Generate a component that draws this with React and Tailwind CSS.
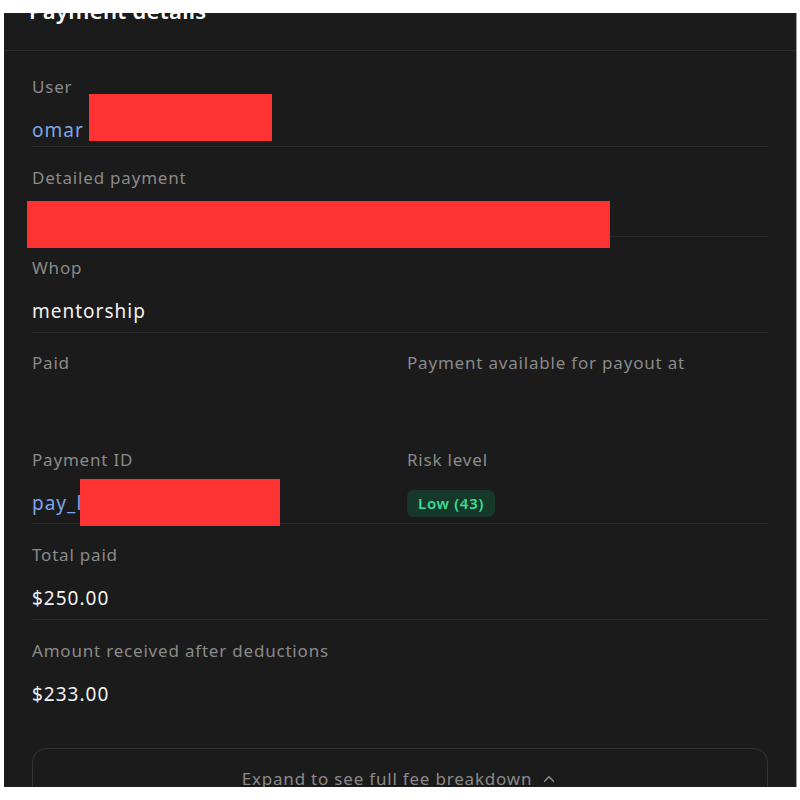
import React from 'react'
import { ChevronUp } from 'lucide-react'

const Label = ({ children }) => (
  <div className="text-[17px] leading-6 tracking-[0.8px] text-[#8a8a8a]">{children}</div>
)

const Value = ({ children, link }) => (
  <div className={`text-[19px] leading-7 tracking-[1px] ${link ? 'text-[#7ba6ec]' : 'text-[#f2f2f2]'}`}>{children}</div>
)

const Redact = ({ className }) => (
  <div className={`absolute bg-[#ff3333] ${className}`} />
)

export default function App() {
  return (
    <div className="min-h-[800px] bg-white pt-[13px] pl-[4px]" style={{ fontFamily: '"Noto Sans", "Open Sans", sans-serif' }}>
      <div className="w-[793px] h-[774px] bg-[#1b1b1b] border-r border-[#9c9c9c] overflow-hidden flex flex-col">
        {/* header */}
        <div className="shrink-0 h-[38px] border-b border-[#2b2b2b] overflow-hidden relative">
          <div className="absolute left-[25px] -top-[19px] text-[22px] leading-8 font-semibold tracking-[0.3px] text-white">Payment details</div>
        </div>

        <div className="shrink-0 px-[28px] flex flex-col">
          {/* user */}
          <div className="relative pt-[24px] pb-[2px] border-b border-[#2b2b2b]">
            <Label>User</Label>
            <div className="mt-[17px]"><Value link>omar</Value></div>
            <Redact className="left-[57px] top-[43px] w-[183px] h-[47px]" />
          </div>

          {/* detailed payment */}
          <div className="relative h-[90px] pt-[19px] border-b border-[#2b2b2b]">
            <Label>Detailed payment</Label>
            <Redact className="-left-[5px] top-[54px] w-[583px] h-[47px] z-10" />
          </div>

          {/* whop */}
          <div className="pt-[19px] pb-[7px] border-b border-[#2b2b2b]">
            <Label>Whop</Label>
            <div className="mt-[17px]"><Value>mentorship</Value></div>
          </div>

          {/* grid */}
          <div className="grid grid-cols-2 border-b border-[#2b2b2b]">
            <div className="h-[96px] pt-[18px]">
              <Label>Paid</Label>
            </div>
            <div className="h-[96px] pt-[18px] pl-[7px]">
              <Label>Payment available for payout at</Label>
            </div>
            <div className="relative pt-[19px] pb-[6px]">
              <Label>Payment ID</Label>
              <div className="mt-[17px]"><Value link>pay_l</Value></div>
              <Redact className="left-[48px] top-[50px] w-[200px] h-[47px]" />
            </div>
            <div className="pt-[19px] pb-[6px] pl-[7px]">
              <Label>Risk level</Label>
              <div className="mt-[17px] h-7 flex items-center">
                <span className="inline-flex items-center h-[27px] px-[11px] rounded-[7px] bg-[#16382a] text-[#3ddc97] text-[15px] tracking-[0.7px] font-semibold">Low (43)</span>
              </div>
            </div>
          </div>

          {/* total paid */}
          <div className="pt-[19px] pb-[7px] border-b border-[#2b2b2b]">
            <Label>Total paid</Label>
            <div className="mt-[17px]"><Value>$250.00</Value></div>
          </div>

          {/* amount received */}
          <div className="pt-[19px] pb-[7px]">
            <Label>Amount received after deductions</Label>
            <div className="mt-[17px]"><Value>$233.00</Value></div>
          </div>

          <button className="mt-[33px] w-full rounded-[14px] border border-[#333333] pt-[18px] pb-[18px] flex items-center justify-center gap-2 text-[17px] leading-6 tracking-[0.8px] text-[#8a8a8a]">
            Expand to see full fee breakdown
            <ChevronUp size={18} strokeWidth={2} />
          </button>
        </div>
      </div>
    </div>
  )
}
